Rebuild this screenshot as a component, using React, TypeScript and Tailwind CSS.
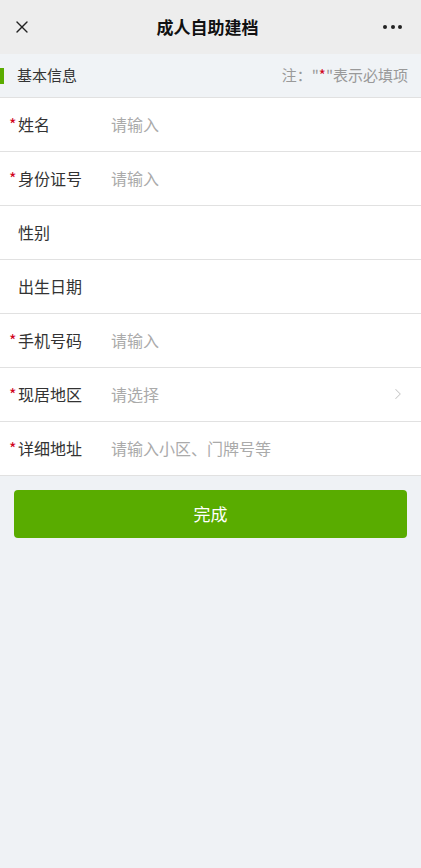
import { X, ChevronRight } from 'lucide-react'

const FONT = '"Noto Sans CJK SC", "Noto Sans", sans-serif'

type Field = { label: string; required?: boolean; placeholder?: string; arrow?: boolean }

const FIELDS: Field[] = [
  { label: '姓名', required: true, placeholder: '请输入' },
  { label: '身份证号', required: true, placeholder: '请输入' },
  { label: '性别' },
  { label: '出生日期' },
  { label: '手机号码', required: true, placeholder: '请输入' },
  { label: '现居地区', required: true, placeholder: '请选择', arrow: true },
  { label: '详细地址', required: true, placeholder: '请输入小区、门牌号等' },
]

export default function App() {
  return (
    <div className="min-h-[868px] w-[421px] bg-[#eff2f5]" style={{ fontFamily: FONT }}>
      <header className="flex h-[54px] items-center justify-between bg-[#ededed] pl-[12px] pr-[19px]">
        <X className="h-[20px] w-[20px] text-[#222]" strokeWidth={1.6} />
        <h1 className="text-[17px] font-bold text-[#111]">成人自助建档</h1>
        <div className="flex w-[19px] items-center justify-between">
          <span className="h-[4px] w-[4px] rounded-full bg-[#222]" />
          <span className="h-[4px] w-[4px] rounded-full bg-[#222]" />
          <span className="h-[4px] w-[4px] rounded-full bg-[#222]" />
        </div>
      </header>

      <div className="flex h-[44px] items-center justify-between border-b border-[#e1e1e1] bg-[#f0f3f6] pr-[13px]">
        <div className="flex items-center">
          <span className="h-[16px] w-[4px] bg-[#5aac00]" />
          <span className="ml-[13px] text-[15px] text-[#333]">基本信息</span>
        </div>
        <span className="text-[15px] text-[#999]">
          注："<span className="text-[#d0021b]">*</span>"表示必填项
        </span>
      </div>

      <div className="bg-white">
        {FIELDS.map((f) => (
          <div key={f.label} className="flex h-[54px] items-center border-b border-[#e1e1e1] pb-[2px] pr-[14px]">
            <div className="flex w-[111px] shrink-0 items-center pl-[9px] text-[16px] text-[#333]">
              <span className="w-[9px] text-[#d0021b]">{f.required ? '*' : ''}</span>
              {f.label}
            </div>
            <span className="flex-1 text-[16px] text-[#aaa]">{f.placeholder}</span>
            {f.arrow && <ChevronRight className="h-[18px] w-[18px] text-[#c8c8c8]" strokeWidth={1.4} />}
          </div>
        ))}
      </div>

      <div className="px-[14px] pt-[14px]">
        <button className="h-[48px] w-full rounded-[4px] bg-[#59ac00] text-[17px] text-white">完成</button>
      </div>
    </div>
  )
}
